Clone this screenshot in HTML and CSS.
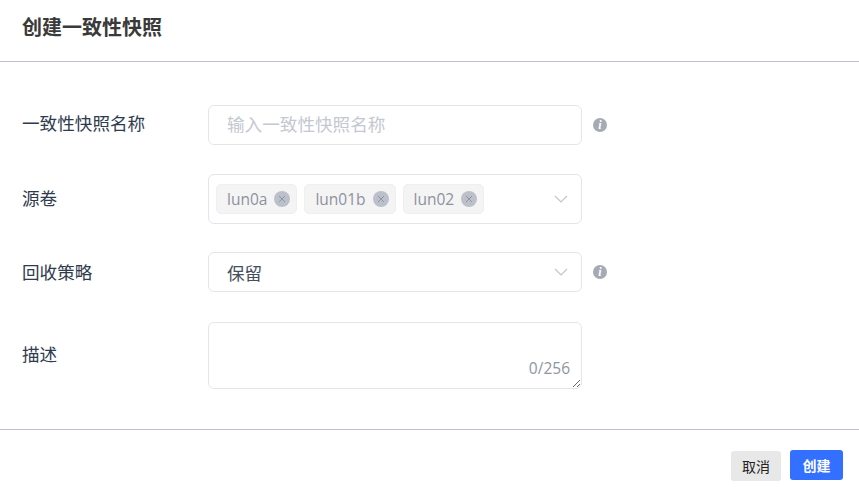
FILE: index.html
```html
<!DOCTYPE html>
<html lang="zh-CN">
<head>
<meta charset="utf-8">
<title>创建一致性快照</title>
<link rel="stylesheet" href="styles.css">
</head>
<body>
<div class="dialog">
    <div class="dialog-header">创建一致性快照</div>

    <form class="dialog-body" action="#">
        <div class="row row-name">
            <label class="row-label">一致性快照名称</label>
            <div class="field"><input class="text-input" type="text" placeholder="输入一致性快照名称"></div>
            <span class="info">i</span>
        </div>

        <div class="row row-source">
            <label class="row-label">源卷</label>
            <div class="field select select-tags">
                <span class="tag">lun0a <span class="tag-close"><svg viewBox="0 0 16 16"><path d="M5 5l6 6M11 5l-6 6"/></svg></span></span>
                <span class="tag">lun01b <span class="tag-close"><svg viewBox="0 0 16 16"><path d="M5 5l6 6M11 5l-6 6"/></svg></span></span>
                <span class="tag">lun02 <span class="tag-close"><svg viewBox="0 0 16 16"><path d="M5 5l6 6M11 5l-6 6"/></svg></span></span>
                <svg class="arrow" viewBox="0 0 14 8"><path d="M1 1l6 6 6-6"/></svg>
            </div>
        </div>

        <div class="row row-policy">
            <label class="row-label">回收策略</label>
            <div class="field select">
                <span class="select-value">保留</span>
                <svg class="arrow" viewBox="0 0 14 8"><path d="M1 1l6 6 6-6"/></svg>
            </div>
            <span class="info">i</span>
        </div>

        <div class="row row-desc">
            <label class="row-label">描述</label>
            <div class="field area">
                <textarea class="text-area"></textarea>
                <span class="counter">0/256</span>
            </div>
        </div>
    </form>

    <div class="dialog-footer">
        <button class="btn btn-cancel" type="button">取消</button>
        <button class="btn btn-primary" type="button">创建</button>
    </div>
</div>
</body>
</html>
```

FILE: styles.css
```css
* {
    box-sizing: border-box;
}

body {
    margin: 0;
    background-color: #fff;
    font-family: "Open Sans", "Noto Sans CJK SC", sans-serif;
    color: #303a4b;
}

.dialog {
    width: 859px;
    height: 487px;
    overflow: hidden;
}

.dialog-header {
    height: 62px;
    padding: 14px 22px 0;
    border-bottom: 1px solid #bcc3cf;
    font-size: 20px;
    line-height: 28px;
    font-weight: 700;
    color: #3a3a3a;
}

.dialog-body {
    height: 368px;
    padding-top: 43px;
    border-bottom: 1px solid #bcc3cf;
}

.row {
    display: flex;
    align-items: center;
}

.row-source { margin-top: 29px; }
.row-policy { margin-top: 28px; }
.row-desc   { margin-top: 30px; }

.row-label {
    width: 208px;
    padding-left: 22px;
    padding-bottom: 2px;
    font-size: 17.6px;
    line-height: 24px;
    color: #2f3b4f;
}

.row-name .row-label,
.row-desc .row-label {
    padding-bottom: 4px;
}

.row-policy .row-label {
    padding-bottom: 0;
}

.field {
    width: 374px;
    border: 1px solid #e3e5ec;
    border-radius: 6px;
    background-color: #fff;
}

.text-input {
    display: block;
    width: 100%;
    height: 38px;
    padding: 0 18px 3px;
    border: 0;
    border-radius: 6px;
    outline: none;
    font-family: inherit;
    font-size: 17.6px;
}

.text-input::placeholder {
    color: #c4c8d0;
}

.select {
    display: flex;
    align-items: center;
    height: 40px;
}

.select-value {
    padding-left: 18px;
    font-size: 17.6px;
    color: #454e5d;
}

.select-tags {
    height: 50px;
    padding-left: 7px;
    gap: 7px;
}

.tag {
    display: flex;
    align-items: center;
    gap: 7px;
    height: 30px;
    padding: 0 6px 0 10px;
    border: 1px solid #eeeff1;
    border-radius: 5px;
    background-color: #f4f4f5;
    font-size: 15.5px;
    color: #8d929c;
}

.tag-close {
    width: 16px;
    height: 16px;
    border-radius: 50%;
    background-color: #bcc0ca;
}

.tag-close svg {
    display: block;
    width: 16px;
    height: 16px;
    fill: none;
    stroke: #8f95a2;
    stroke-width: 1;
}

.arrow {
    width: 14px;
    height: 8px;
    margin-left: auto;
    margin-right: 13px;
    fill: none;
    stroke: #c2c5cd;
    stroke-width: 1.2;
}

.info {
    width: 14px;
    height: 14px;
    margin-left: 11px;
    border-radius: 50%;
    background-color: #a5aab4;
    color: #fff;
    font-family: "Liberation Serif", serif;
    font-size: 12px;
    font-style: italic;
    font-weight: 700;
    line-height: 14px;
    text-align: center;
}

.area {
    position: relative;
    height: 67px;
}

.text-area {
    display: block;
    width: 100%;
    height: 65px;
    border: 0;
    border-radius: 6px;
    outline: none;
    resize: vertical;
}

.counter {
    position: absolute;
    right: 11px;
    bottom: 10px;
    font-size: 15.5px;
    line-height: 20px;
    color: #91959e;
}

.dialog-footer {
    display: flex;
    justify-content: flex-end;
    align-items: flex-start;
    gap: 9px;
    padding: 20px 16px 0 0;
}

.btn {
    height: 30px;
    padding: 0;
    border: 0;
    border-radius: 3px;
    font-family: inherit;
    font-size: 14px;
}

.btn-cancel {
    width: 50px;
    margin-top: 1px;
    background-color: #e8e8e8;
    color: #222;
}

.btn-primary {
    width: 53px;
    background-color: #3370ff;
    color: #fff;
    font-weight: 700;
}
```
